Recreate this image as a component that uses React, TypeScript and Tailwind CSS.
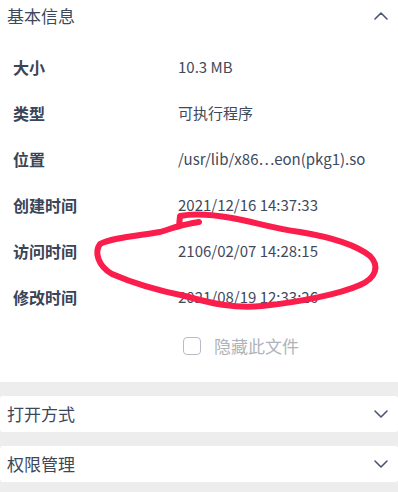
import React from "react";

const rows: [string, string][] = [
  ["大小", "10.3 MB"],
  ["类型", "可执行程序"],
  ["位置", "/usr/lib/x86\u22efeon(pkg1).so"],
  ["创建时间", "2021/12/16 14:37:33"],
  ["访问时间", "2106/02/07 14:28:15"],
  ["修改时间", "2021/08/19 12:33:26"],
];

function Chevron({ up }: { up?: boolean }) {
  return (
    <svg width="14" height="8" viewBox="0 0 14 8" fill="none">
      <path
        d={up ? "M1 7 L7 1 L13 7" : "M1 1 L7 7 L13 1"}
        stroke="#4b5570"
        strokeWidth="1.6"
        strokeLinecap="round"
        strokeLinejoin="round"
      />
    </svg>
  );
}

export default function App() {
  return (
    <div
      className="relative w-[398px] h-[492px] overflow-hidden bg-[#ededed]"
      style={{ fontFamily: '"Noto Sans CJK SC", "Noto Sans", sans-serif' }}
    >
      <div className="bg-white pb-[11px]">
        <div className="h-[32px] flex items-center justify-between pl-[7px] pr-[10px]">
          <span className="text-[17px] text-[#3d475a]">基本信息</span>
          <Chevron up />
        </div>
        <div className="mt-[12px] pl-[13px]">
          {rows.map(([k, v]) => (
            <div key={k} className="h-[46px] flex items-center">
              <span className="w-[165px] text-[16px] font-bold text-[#3a4457]">{k}</span>
              <span className="text-[15px] text-[#3f495c]">{v}</span>
            </div>
          ))}
          <div className="h-[51px] flex items-center pl-[170px]">
            <span className="w-[18px] h-[18px] rounded-[4px] border-[1.5px] border-[#b7bcc4] bg-white" />
            <span className="ml-[13px] text-[17px] text-[#aeb3bb]">隐藏此文件</span>
          </div>
        </div>
      </div>
      <div className="mt-[14px] h-[36px] bg-white rounded-[3px] flex items-center justify-between pl-[7px] pr-[10px]">
        <span className="text-[17px] text-[#3d475a]">打开方式</span>
        <Chevron />
      </div>
      <div className="mt-[14px] h-[36px] bg-white rounded-[3px] flex items-center justify-between pl-[7px] pr-[10px]">
        <span className="text-[17px] text-[#3d475a]">权限管理</span>
        <Chevron />
      </div>
      <svg
        className="absolute left-0 top-0 pointer-events-none"
        width="398"
        height="492"
        viewBox="0 0 398 492"
      >
        <path
          d="M199 222 C192 223 184 225 179 226 L180 216 C195 213 215 215 232 218 C255 222 270 228 300 232 C330 237 355 244 370 256 C380 266 376 278 360 285 C340 294 300 302 262 306 C235 309 210 303 185 296 C160 291 135 284 112 274 C98 266 94 252 100 244 C110 238 135 236 160 232 C170 229 175 227 180 226"
          fill="none"
          stroke="#fb1d4b"
          strokeWidth="6"
          strokeLinecap="round"
          strokeLinejoin="round"
        />
      </svg>
    </div>
  );
}
